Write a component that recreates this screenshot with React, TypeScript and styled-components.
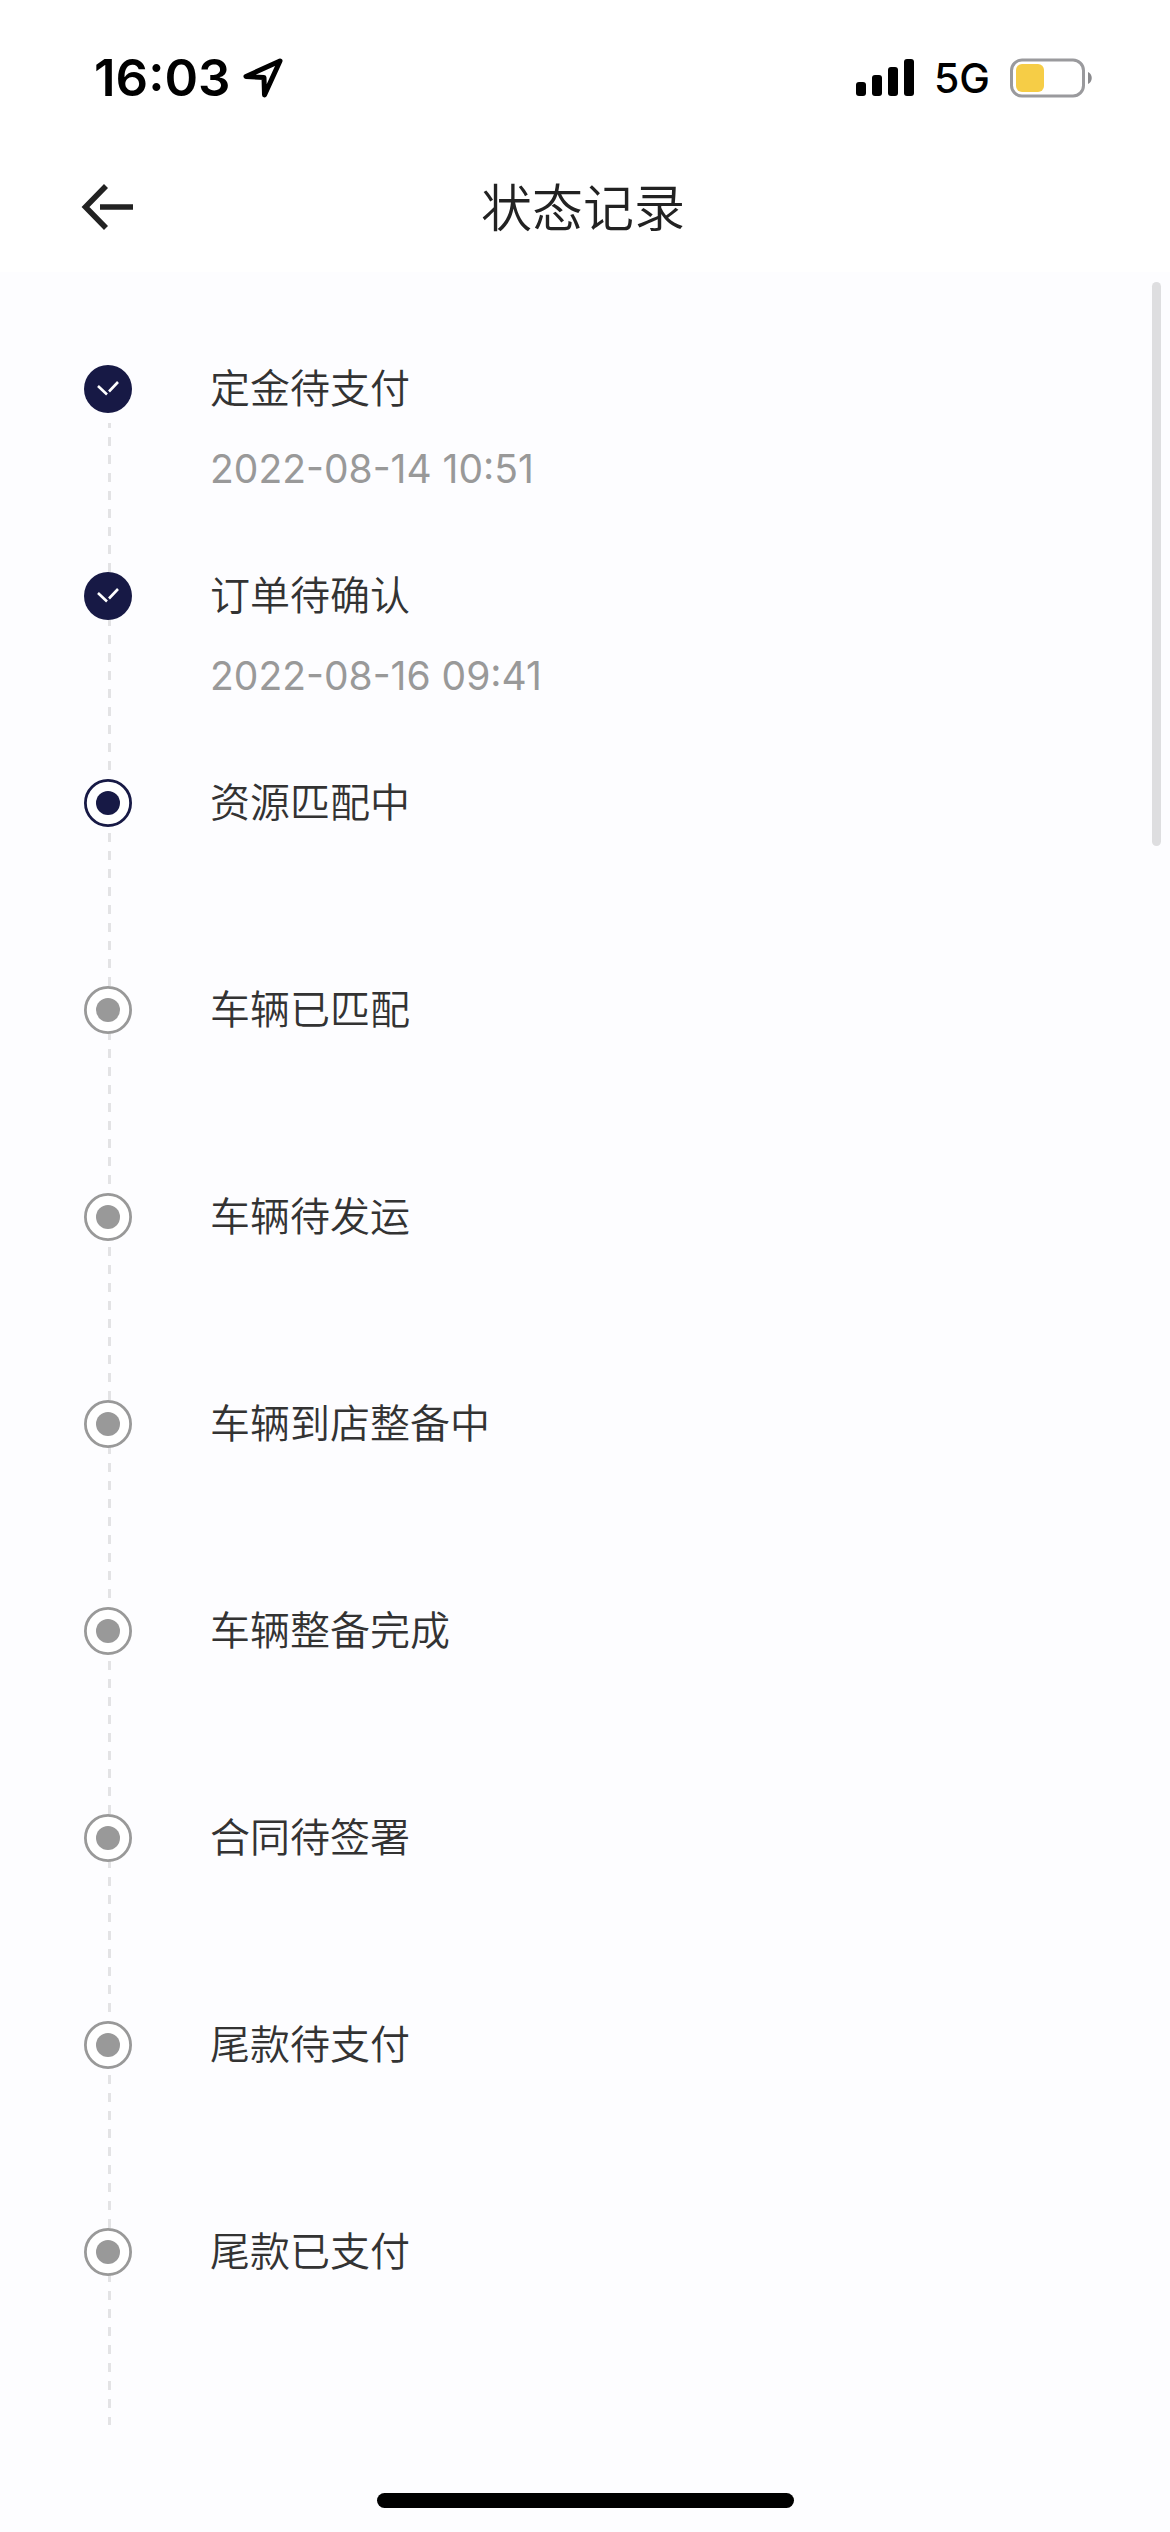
import React from "react";
import styled, { createGlobalStyle } from "styled-components";

const NAVY = "#171945";
const GREY = "#999999";

const GlobalStyle = createGlobalStyle`
  *, *::before, *::after { box-sizing: border-box; }
  body {
    margin: 0;
    background: #fdfdff;
    font-family: Inter, "Noto Sans CJK SC", sans-serif;
  }
`;

const Screen = styled.div`
  display: flex;
  flex-direction: column;
  min-height: 100vh;
`;

const StatusBar = styled.div`
  display: flex;
  align-items: center;
  justify-content: space-between;
  height: 156px;
  padding: 0 77px 0 94px;
  background: #ffffff;
  color: #000000;
`;

const StatusGroup = styled.div<{ $gap: number }>`
  display: flex;
  align-items: center;
  gap: ${(p) => p.$gap}px;
`;

const Time = styled.time`
  font-size: 51px;
  line-height: 60px;
  font-weight: 600;
`;

const Network = styled.span`
  font-size: 41px;
  line-height: 60px;
  font-weight: 500;
`;

const NavBar = styled.header`
  display: grid;
  grid-template-columns: 120px 1fr 120px;
  align-items: center;
  height: 116px;
  padding: 0 26px 14px 22px;
  background: #ffffff;
`;

const BackButton = styled.button`
  display: flex;
  align-items: center;
  width: 120px;
  height: 96px;
  padding: 0 0 0 59px;
  border: 0;
  background: none;
  cursor: pointer;
`;

const Title = styled.h1`
  margin: 0;
  padding-top: 3px;
  font-size: 51px;
  line-height: 72px;
  font-weight: 350;
  text-align: center;
  color: #222222;
`;

const Content = styled.main`
  position: relative;
  flex: 1;
  padding: 93px 84px 0;
`;

const ScrollThumb = styled.div`
  position: absolute;
  top: 10px;
  right: 9px;
  width: 9px;
  height: 564px;
  border-radius: 5px;
  background: #dedee0;
`;

const Timeline = styled.ol`
  margin: 0;
  padding: 0;
  list-style: none;
  background: repeating-linear-gradient(
      to bottom,
      #e3e3e5 0 5px,
      transparent 5px 14px,
      #e3e3e5 14px 18px
    )
    24px 58px / 3px calc(100% - 68px) no-repeat;
`;

const Step = styled.li`
  display: grid;
  grid-template-columns: 48px 1fr;
  align-content: start;
  column-gap: 78px;
  row-gap: 32px;
  min-height: 207px;
`;

const StepName = styled.span`
  font-size: 40px;
  line-height: 48px;
  font-weight: 350;
  color: #333333;
`;

const StepDate = styled.time`
  grid-column: 2;
  font-size: 39px;
  line-height: 48px;
  color: ${GREY};
`;

const HomeArea = styled.footer`
  display: flex;
  justify-content: center;
  padding: 24px 0;
`;

const HomeIndicator = styled.div`
  width: 417px;
  height: 15px;
  border-radius: 8px;
  background: #000000;
`;

type StepState = "done" | "current" | "pending";

function Marker({ state }: { state: StepState }) {
  const color = state === "pending" ? GREY : NAVY;
  return (
    <svg width="48" height="48" viewBox="0 0 48 48" aria-hidden="true">
      {state === "done" ? (
        <>
          <circle cx="24" cy="24" r="24" fill={NAVY} />
          <path d="M14 21L23 29.5M25 26.5L34 17" fill="none" stroke="#fff" strokeWidth="2.6" />
        </>
      ) : (
        <>
          <circle cx="24" cy="24" r="22.6" fill="#fff" stroke={color} strokeWidth="2.8" />
          <circle cx="24" cy="24" r="12" fill={color} />
        </>
      )}
    </svg>
  );
}

const steps: { name: string; state: StepState; date?: string }[] = [
  { name: "定金待支付", state: "done", date: "2022-08-14 10:51" },
  { name: "订单待确认", state: "done", date: "2022-08-16 09:41" },
  { name: "资源匹配中", state: "current" },
  { name: "车辆已匹配", state: "pending" },
  { name: "车辆待发运", state: "pending" },
  { name: "车辆到店整备中", state: "pending" },
  { name: "车辆整备完成", state: "pending" },
  { name: "合同待签署", state: "pending" },
  { name: "尾款待支付", state: "pending" },
  { name: "尾款已支付", state: "pending" },
];

export default function App() {
  return (
    <Screen>
      <GlobalStyle />
      <StatusBar>
        <StatusGroup $gap={11}>
          <Time>16:03</Time>
          <svg width="42" height="42" viewBox="0 0 42 42" aria-hidden="true">
            <path
              d="M38 4L4 19.5L22 20.5L22.5 38Z"
              fill="none"
              stroke="#000"
              strokeWidth="5"
              strokeLinejoin="round"
            />
          </svg>
        </StatusGroup>
        <StatusGroup $gap={20}>
          <svg width="58" height="38" viewBox="0 0 58 38" aria-hidden="true">
            <rect x="0" y="23" width="10" height="14" rx="3" />
            <rect x="16" y="16" width="10" height="21" rx="3" />
            <rect x="32" y="8" width="10" height="29" rx="3" />
            <rect x="48" y="0" width="10" height="37" rx="3" />
          </svg>
          <Network>5G</Network>
          <svg width="83" height="40" viewBox="0 0 83 40" aria-hidden="true">
            <rect x="1.5" y="2" width="72" height="36" rx="10.5" fill="none" stroke="#9a9a9d" strokeWidth="3" />
            <rect x="6" y="6" width="28" height="28" rx="6" fill="#f6cd46" />
            <path d="M78 14C83 16 83 24 78 26Z" fill="#8a8a8d" />
          </svg>
        </StatusGroup>
      </StatusBar>
      <NavBar>
        <BackButton type="button" aria-label="返回">
          <svg width="53" height="46" viewBox="0 0 53 46" aria-hidden="true">
            <path d="M25 2L4.5 23L25 44M19 23H52" fill="none" stroke="#222" strokeWidth="5.6" />
          </svg>
        </BackButton>
        <Title>状态记录</Title>
      </NavBar>
      <Content>
        <Timeline>
          {steps.map((step) => (
            <Step key={step.name}>
              <Marker state={step.state} />
              <StepName>{step.name}</StepName>
              {step.date && <StepDate>{step.date}</StepDate>}
            </Step>
          ))}
        </Timeline>
        <ScrollThumb />
      </Content>
      <HomeArea>
        <HomeIndicator />
      </HomeArea>
    </Screen>
  );
}
